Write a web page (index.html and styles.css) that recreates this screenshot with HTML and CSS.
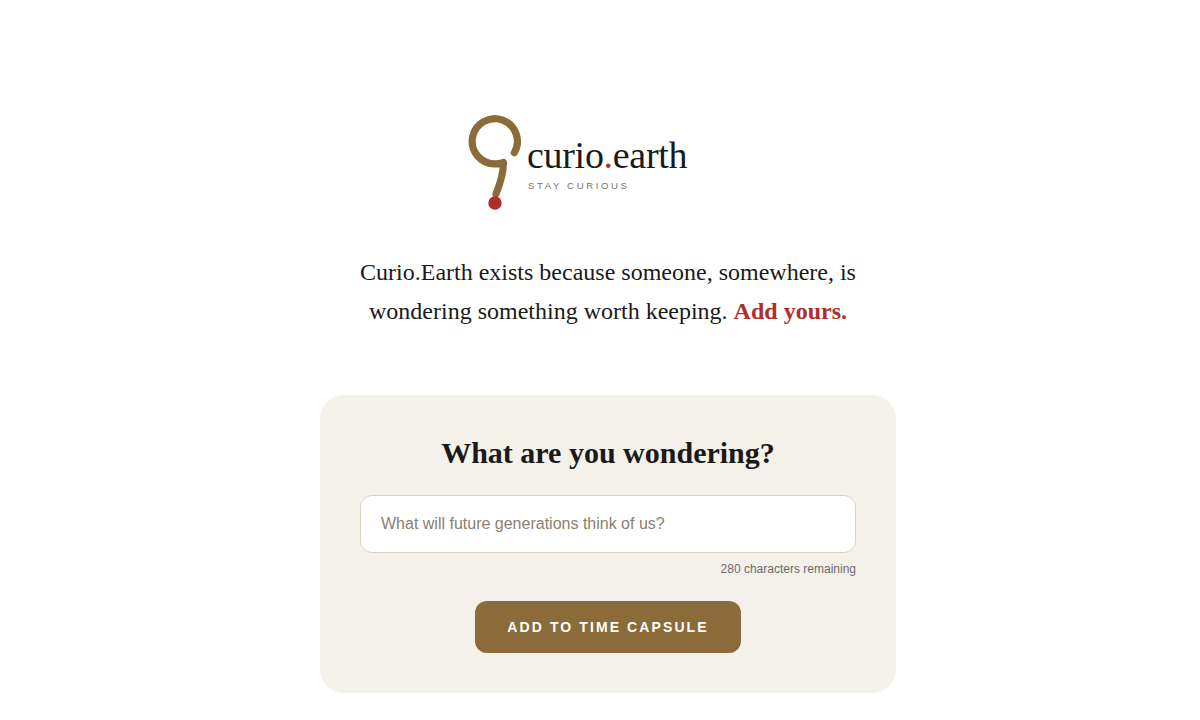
FILE: index.html
```html
<!DOCTYPE html>
<html lang="en">
<head>
    <meta charset="UTF-8">
    <title>Curio.Earth</title>
    <link rel="stylesheet" href="styles.css">
</head>
<body>
    <main class="page">
        <div class="logo">
            <svg class="logo-mark" width="60" height="100" viewBox="0 0 60 100">
                <path d="M49.3 40.7A22.6 22.6 0 1 0 29.5 51.9Q34 52 38.5 50.5C38.5 60 35 72 31 82" fill="none" stroke="#8b6b3a" stroke-width="7.2" stroke-linecap="round" stroke-linejoin="round"/>
                <circle cx="30" cy="91" r="6.7" fill="#b02e2a"/>
            </svg>
            <div class="logo-text">
                <div class="logo-name">curio<span class="dot">.</span>earth</div>
                <div class="logo-tag">STAY CURIOUS</div>
            </div>
        </div>

        <p class="intro">Curio.Earth exists because someone, somewhere, is wondering something worth keeping. <strong>Add yours.</strong></p>

        <form class="card">
            <h2>What are you wondering?</h2>
            <input class="question" type="text" placeholder="What will future generations think of us?">
            <div class="counter">280 characters remaining</div>
            <button class="submit" type="button">ADD TO TIME CAPSULE</button>
        </form>
    </main>
</body>
</html>
```

FILE: styles.css
```css
* {
    box-sizing: border-box;
}
body {
    margin: 0;
    background-color: #fff;
    color: #1a1a1a;
    font-family: "Liberation Serif", serif;
}
.page {
    width: 576px;
    margin: 0 auto;
    padding-top: 112px;
    position: relative;
    left: 8px;
}
.logo {
    display: flex;
    align-items: flex-start;
    padding-left: 145px;
}
.logo-mark {
    display: block;
    flex: none;
}
.logo-text {
    margin-left: 2px;
    padding-top: 21px;
}
.logo-name {
    font-size: 38px;
    line-height: 44px;
    letter-spacing: -0.3px;
}
.dot {
    color: #b02e2a;
}
.logo-tag {
    font-family: "Liberation Sans", sans-serif;
    font-size: 9.6px;
    line-height: 12px;
    letter-spacing: 2.6px;
    color: #7d7363;
    margin: 3px 0 0 1px;
}
.intro {
    width: 496px;
    margin: 41px auto 64px;
    font-size: 24px;
    line-height: 39px;
    text-align: center;
}
.intro strong {
    color: #b02e2a;
}
.card {
    background-color: #f4f1ea;
    border-radius: 24px;
    padding: 40px;
    display: flex;
    flex-direction: column;
    align-items: center;
}
.card h2 {
    margin: 0 0 24px;
    font-size: 30px;
    line-height: 36px;
}
.question {
    width: 100%;
    height: 58px;
    padding: 0 20px;
    background-color: #fff;
    border: 1px solid #d9d2c5;
    border-radius: 12px;
    font-family: "Liberation Sans", sans-serif;
    font-size: 16px;
}
.question::placeholder {
    color: #8a8070;
    opacity: 1;
}
.counter {
    align-self: flex-end;
    margin-top: 8px;
    font-family: "Liberation Sans", sans-serif;
    font-size: 12px;
    line-height: 16px;
    color: #6b6b6b;
}
.submit {
    margin-top: 24px;
    height: 52px;
    padding: 0 32px;
    background-color: #8b6b3a;
    color: #fff;
    border: none;
    border-radius: 12px;
    font-family: "Liberation Sans", sans-serif;
    font-size: 14px;
    font-weight: bold;
    letter-spacing: 2.1px;
}
```
